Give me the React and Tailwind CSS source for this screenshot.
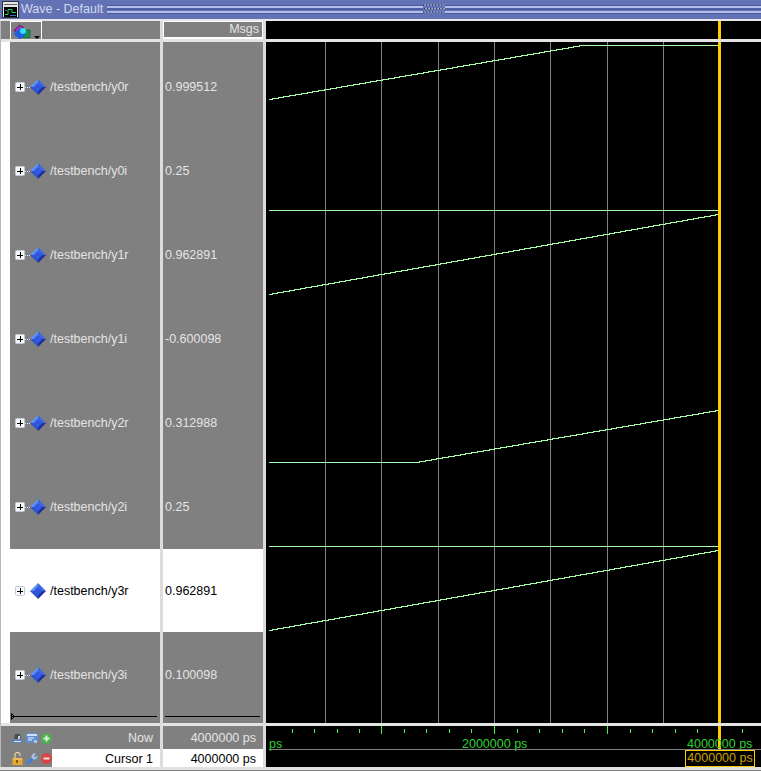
const signals = [
  { name: "/testbench/y0r", value: "0.999512" },
  { name: "/testbench/y0i", value: "0.25" },
  { name: "/testbench/y1r", value: "0.962891" },
  { name: "/testbench/y1i", value: "-0.600098" },
  { name: "/testbench/y2r", value: "0.312988" },
  { name: "/testbench/y2i", value: "0.25" },
  { name: "/testbench/y3r", value: "0.962891", selected: true },
  { name: "/testbench/y3i", value: "0.100098" },
];

const gridLines = [325, 381, 438, 494, 550, 607, 663];

// coordinates are page pixels minus the wave pane origin (266, 42)
const OX = 266;
const OY = 42;

// analog trace: stairs of 1px in y between each pair of points
function stairs(points) {
  let d = `M${points[0][0] - OX} ${points[0][1] - OY + 0.5}`;
  for (let i = 1; i < points.length; i++) {
    const [x0, y0] = points[i - 1];
    const [x1, y1] = points[i];
    const n = Math.abs(y1 - y0);
    if (n === 0) {
      d += ` H${x1 - OX}`;
      continue;
    }
    const dir = y1 > y0 ? 1 : -1;
    for (let k = 1; k <= n; k++) {
      d += ` H${(x0 + ((x1 - x0) * (k - 0.5)) / n - OX).toFixed(0)} V${y0 + dir * k - OY + 0.5}`;
    }
    d += ` H${x1 - OX}`;
  }
  return d;
}

const traces = [
  [[269, 99], [582, 45], [718, 45]],
  [[269, 210], [718, 210]],
  [[269, 294], [718, 214]],
  [[269, 462], [416, 462], [718, 410]],
  [[269, 546], [718, 546]],
  [[269, 630], [718, 550]],
];

const majorTicks = [381, 494, 607, 719];
const ticks = [292, 314, 337, 359, 381, 404, 426, 449, 471, 494, 517, 539, 562, 584, 607, 630, 652, 675, 697, 719, 742];

function Diamond() {
  return (
    <svg width="16" height="16" viewBox="0 0 16 16" className="shrink-0">
      <path d="M8 0 8 8 0 8Z" fill="#5b93ee" />
      <path d="M8 0 16 8 8 8Z" fill="#4068dc" />
      <path d="M0 8 8 8 8 16Z" fill="#2f55cc" />
      <path d="M16 8 8 8 8 16Z" fill="#1e2f98" />
      <path d="M8 3.5 12.5 8 8 12.5 3.5 8Z" fill="#3158e0" />
    </svg>
  );
}

function ExpandBox() {
  return (
    <svg width="16" height="10" viewBox="0 0 16 10" className="shrink-0">
      <rect x="0.5" y="0.5" width="9" height="9" rx="1" fill="#f8f9fd" stroke="#c4c8d8" />
      <path d="M2 5H8M5 2V8" stroke="#000" shapeRendering="crispEdges" />
      <path d="M10 5.5H16" stroke="#e8e8e8" strokeDasharray="1 1" />
    </svg>
  );
}

function Row({ name, selected }) {
  return (
    <div
      className={
        "flex items-center pl-[5px] " +
        (selected ? "mb-[1px] h-[83px] bg-white pt-[1px] text-black" : "h-[84px] text-[#e4e4e4]")
      }
    >
      <ExpandBox />
      <div className="-ml-[1px] flex items-center">
        <Diamond />
      </div>
      <span className="ml-[4px] whitespace-nowrap">{name}</span>
    </div>
  );
}

function TitleIcon() {
  return (
    <svg width="17" height="17" viewBox="0 0 17 17" className="shrink-0">
      <rect width="17" height="17" fill="#30303a" />
      <rect x="1" y="1" width="15" height="15" fill="#e4e4e4" />
      <path d="M2 3.5H15" stroke="#606060" />
      <rect x="2" y="6" width="13" height="10" fill="#000" />
      <path d="M3 13.5H6V8.5H10V11.5H14" fill="none" stroke="#2fd05a" />
      <path d="M3 9.5H5M8 14.5H14" stroke="#3a70d0" />
    </svg>
  );
}

function Groove() {
  return (
    <div className="flex flex-1 flex-col">
      <div className="h-[1px] bg-[#4a5a9e]" />
      <div className="h-[2px] bg-[#b4bee6]" />
      <div className="h-[2px] bg-[#4f5fa4]" />
      <div className="mt-[1px] h-[2px] bg-[#b4bee6]" />
      <div className="h-[1px] bg-[#4a5a9e]" />
    </div>
  );
}

function Grip() {
  const dots = [];
  for (let r = 0; r < 3; r++) {
    for (let c = 0; c < 7; c++) {
      dots.push(<rect key={`${r}-${c}`} x={c * 3 + (r % 2) + 0.5} y={r * 3.5 + 0.5} width="1" height="1" fill="#000" />);
      dots.push(<rect key={`w${r}-${c}`} x={c * 3 + (r % 2) + 1.5} y={r * 3.5 + 0.5} width="1" height="1" fill="#fff" />);
    }
  }
  return (
    <svg width="22" height="11" viewBox="0 0 22 11" className="shrink-0">
      {dots}
    </svg>
  );
}

function FormatIcon() {
  return (
    <svg width="18" height="17" viewBox="0 0 18 17" className="shrink-0">
      <path d="M1 7.5 6.5 2 11 5 6 10Z" fill="#b030c8" stroke="#30103f" strokeWidth="0.8" />
      <rect x="10" y="7" width="7" height="7.5" fill="#18904a" stroke="#0c5a2c" strokeWidth="0.6" />
      <path d="M7 5 13.5 11 7 16.5 0.5 11Z" fill="#2060e0" />
      <circle cx="10" cy="8" r="3" fill="#30e0f0" />
    </svg>
  );
}

function NowIcons() {
  return (
    <div className="flex w-[42px] shrink-0 items-center gap-[3px] pl-[2px]">
      <svg width="11" height="11" viewBox="0 0 11 11" className="shrink-0">
        <path d="M3 1H8L9 6H2Z" fill="#4a5058" />
        <path d="M6 3H8V6H6Z" fill="#c8d0dc" />
        <path d="M0 6.5H11V10H0Z" fill="#5f84b8" />
        <path d="M2 8.5H9" stroke="#d8e2f2" />
      </svg>
      <svg width="12" height="11" viewBox="0 0 12 11" className="shrink-0">
        <rect width="12" height="10" rx="1" fill="#5f8fd0" />
        <path d="M1 1H11V3H1Z" fill="#cfe0f6" />
        <path d="M2 5H8M2 7H6" stroke="#eef4fc" />
        <path d="M8 7H11V10H8Z" fill="#b8c0d0" />
      </svg>
      <svg width="11" height="11" viewBox="0 0 11 11" className="shrink-0">
        <circle cx="5.5" cy="5.5" r="5.5" fill="#4fae4f" />
        <path d="M2.5 5.5H8.5M5.5 2.5V8.5" stroke="#d8f0d8" strokeWidth="2" />
      </svg>
    </div>
  );
}

function CursorIcons() {
  return (
    <div className="flex w-[42px] shrink-0 items-center gap-[3px] pl-[2px] pt-[1px]">
      <svg width="11" height="13" viewBox="0 0 11 13" className="shrink-0">
        <path d="M3 6V3A2.5 2.5 0 0 1 8 3V4" fill="none" stroke="#e8d9a0" strokeWidth="1.2" />
        <rect x="0.5" y="6" width="10" height="7" fill="#e8a830" />
        <path d="M1 7H10" stroke="#f4d070" />
        <rect x="4" y="8" width="2" height="3" fill="#8a5a10" />
      </svg>
      <svg width="12" height="12" viewBox="0 0 12 12" className="shrink-0">
        <path d="M1.5 10.5 7 5" stroke="#3f7fdc" strokeWidth="3" />
        <path d="M5.5 4.5A3.5 3.5 0 0 1 10 0.5L8 3 9 4.5 11.5 2.5A3.5 3.5 0 0 1 7.5 6.5Z" fill="#a8c4ec" />
      </svg>
      <svg width="11" height="11" viewBox="0 0 11 11" className="shrink-0">
        <circle cx="5.5" cy="5.5" r="5.5" fill="#d84444" />
        <path d="M2.5 5.5H8.5" stroke="#f6dcdc" strokeWidth="2" />
      </svg>
    </div>
  );
}

export default function App() {
  return (
    <div className="flex h-[771px] w-[761px] flex-col overflow-hidden bg-[#808080] font-['Liberation_Sans',sans-serif] text-[12.5px] leading-none">
      {/* title bar */}
      <div className="flex h-[19px] shrink-0 items-center bg-[#6272b4] pl-[2px]">
        <TitleIcon />
        <span className="ml-[2px] w-[86px] whitespace-nowrap text-[#d4daf2]">Wave - Default</span>
        <Groove />
        <Grip />
        <Groove />
      </div>

      <div className="flex h-[2px] shrink-0 bg-[#e8e8e8]" />

      {/* header + rows + footer */}
      <div className="flex h-[746px] shrink-0">
        <div className="flex w-[160px] shrink-0 flex-col border-l border-[#b8b8b8]">
          <div className="flex h-[18px] shrink-0 bg-[#808080] pl-[9px]">
            <div className="flex h-[18px] w-[32px] border-x border-t border-white pl-[2px] pt-[1px]">
              <FormatIcon />
              <svg width="6" height="3" viewBox="0 0 6 3" className="ml-[3px] mt-[13px] shrink-0">
                <path d="M0 0H6L3 3Z" fill="#000" />
              </svg>
            </div>
          </div>
          <div className="h-[3px] shrink-0 bg-[#e4e4e4]" />
          <div className="flex h-[681px] shrink-0">
            <div className="w-[9px] shrink-0 bg-white" />
            <div className="relative flex-1 bg-[#808080] pt-[3px]">
              {signals.map((s) => (
                <Row key={s.name} name={s.name} selected={s.selected} />
              ))}
              <div className="absolute bottom-[6px] left-[2px] right-[3px] h-[1px] bg-black" />
              <svg width="4" height="7" viewBox="0 0 4 7" className="absolute bottom-[3px] left-[1px]">
                <path d="M0.5 0.5 3.5 3.5 0.5 6.5Z" fill="none" stroke="#000" />
              </svg>
            </div>
          </div>
          <div className="h-[3px] shrink-0 bg-[#e4e4e4]" />
          <div className="flex h-[23px] shrink-0 items-center bg-[#808080] pl-[9px] pt-[2px] text-[#e4e4e4]">
            <NowIcons />
            <span className="flex-1 pr-[7px] text-right">Now</span>
          </div>
          <div className="flex h-[18px] shrink-0 items-center bg-[#808080] pl-[9px]">
            <CursorIcons />
            <span className="flex h-full flex-1 items-center justify-end bg-white pr-[7px] pt-[2px] text-black">Cursor 1</span>
          </div>
        </div>

        <div className="w-[3px] shrink-0 bg-[#dcdcdc]" />

        <div className="flex w-[100px] shrink-0 flex-col text-[#e4e4e4]">
          <div className="flex h-[18px] shrink-0 items-center justify-end border border-b-2 border-white bg-[#808080] pr-[3px]">
            Msgs
          </div>
          <div className="h-[3px] shrink-0 bg-[#e4e4e4]" />
          <div className="relative h-[681px] shrink-0 bg-[#808080] pt-[3px]">
            {signals.map((s) => (
              <div
                key={s.name}
                className={
                  "flex items-center pl-[2px] " +
                  (s.selected ? "mb-[1px] h-[83px] bg-white pt-[1px] text-black" : "h-[84px]")
                }
              >
                {s.value}
              </div>
            ))}
            <div className="absolute bottom-[6px] left-[2px] right-[3px] h-[1px] bg-black" />
          </div>
          <div className="h-[3px] shrink-0 bg-[#e4e4e4]" />
          <div className="flex h-[23px] shrink-0 items-center justify-end bg-[#808080] pr-[7px] pt-[2px]">4000000 ps</div>
          <div className="flex h-[18px] shrink-0 items-center justify-end bg-white pr-[7px] pt-[2px] text-black">4000000 ps</div>
        </div>

        <div className="w-[3px] shrink-0 bg-[#dcdcdc]" />

        {/* wave pane */}
        <div className="flex min-w-0 flex-1 flex-col bg-black">
          <div className="flex h-[18px] shrink-0 justify-start">
            <div className="ml-[452px] h-full w-[3px] bg-[#ffcc00]" />
          </div>
          <div className="h-[3px] shrink-0 bg-[#e4e4e4]" />
          <svg width="495" height="681" viewBox="0 0 495 681" className="block shrink-0" shapeRendering="crispEdges">
            {gridLines.map((x) => (
              <path key={x} d={`M${x - OX + 0.5} 0V681`} stroke="#808080" />
            ))}
            {traces.map((t, i) => (
              <path key={i} d={stairs(t)} fill="none" stroke="#a8ffa8" />
            ))}
            <rect x="452" y="0" width="3" height="681" fill="#ffcc00" />
          </svg>
          <div className="h-[3px] shrink-0 bg-[#e4e4e4]" />
          <div className="relative h-[41px] shrink-0">
            <svg width="495" height="41" viewBox="0 0 495 41" className="absolute left-0 top-0" shapeRendering="crispEdges">
              {ticks.map((x) => (
                <path
                  key={x}
                  d={`M${x - OX + 0.5} ${majorTicks.includes(x) ? 0 : 3}V${majorTicks.includes(x) ? 8 : 7}`}
                  stroke="#44ee44"
                />
              ))}
              <path d="M3 23.5H495" stroke="#808080" />
              <rect x="452" y="0" width="3" height="23" fill="#ffcc00" />
            </svg>
            <span className="absolute left-[3px] top-[12px] text-[#30d030]">ps</span>
            <span className="absolute left-[196px] top-[12px] whitespace-nowrap text-[#30d030]">2000000 ps</span>
            <span className="absolute left-[421px] top-[12px] whitespace-nowrap text-[#30d030]">4000000 ps</span>
            <div className="absolute left-[419px] top-[24px] flex h-[17px] w-[70px] items-center justify-center whitespace-nowrap border border-[#ffcc00] text-[#c8a000]">
              4000000 ps
            </div>
          </div>
        </div>
      </div>
      <div className="h-[3px] shrink-0 bg-[#e0e0e0]" />
    </div>
  );
}
